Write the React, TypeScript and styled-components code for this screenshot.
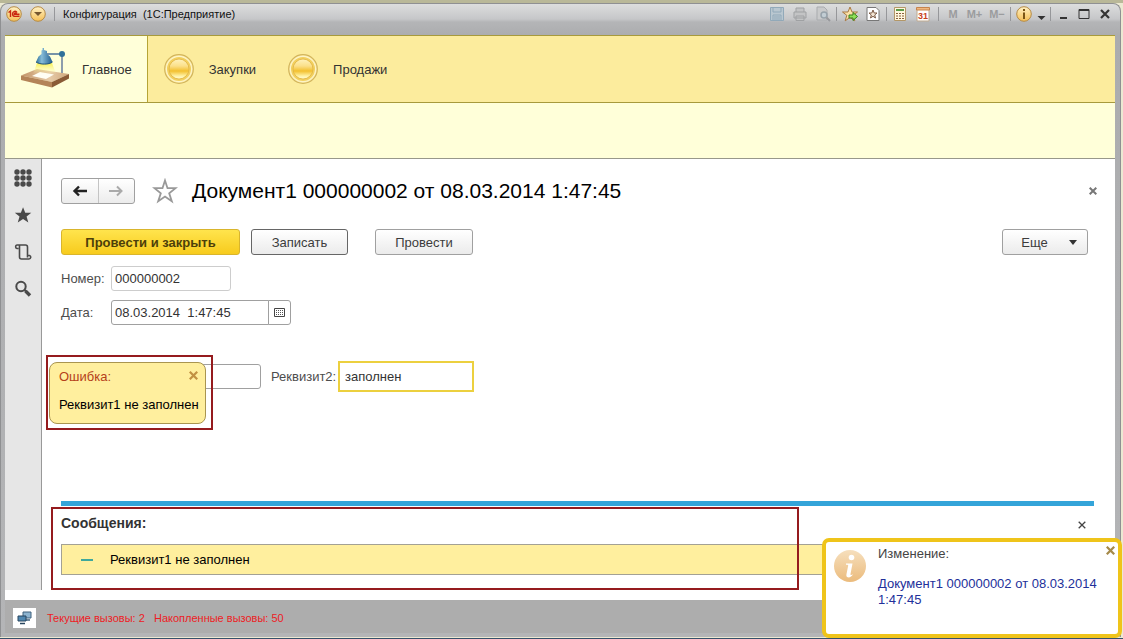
import React from "react";
import styled, { createGlobalStyle, css } from "styled-components";

const Global = createGlobalStyle`
  *, *::before, *::after { box-sizing: border-box; }
  body { margin: 0; background: #e9e8cf; }
  body, button, input { font-family: "Liberation Sans", Arial, sans-serif; font-size: 13px; }
  button, input { margin: 0; }
`;

const Desktop = styled.div`
  min-height: 100vh;
  display: flex;
  padding: 3px 2px 2px 0;
  background: linear-gradient(to top, #35516b 0 1px, transparent 1px), linear-gradient(#b9b898 0 3px, #ece9d2 3px);
`;

const Window = styled.div`
  position: relative;
  flex: 1;
  min-width: 0;
  display: flex;
  flex-direction: column;
  padding: 0 5px 4px 4px;
  border: 1px solid #8f9092;
  border-bottom: 0;
  border-radius: 8px 8px 0 0;
  background: linear-gradient(#dcdddd 0, #c6c7c9 15px, #b4b5b7 18px, #abacae 32px, #b4b5b7 100%);
`;

const TitleBar = styled.header`
  height: 31px;
  padding: 0 2px 11px 1px;
  display: flex;
  align-items: center;
`;

const RoundButton = styled.button`
  width: 16px;
  height: 16px;
  padding: 0;
  border: 0;
  background: none;
  margin-right: 8px;
  svg { display: block; }
`;

const Divider = styled.span<{ $gap?: number }>`
  width: 1px;
  height: 14px;
  background: #96979a;
  margin: 0 ${(p) => p.$gap ?? 7}px;
`;

const WindowTitle = styled.h1`
  flex: 1;
  margin: 0 0 0 8px;
  font: 400 11px/16px "Liberation Sans", Tahoma, sans-serif;
  color: #111;
  white-space: pre;
`;

const ToolGroup = styled.div<{ $gap: number }>`
  display: flex;
  align-items: center;
  gap: ${(p) => p.$gap}px;
`;

const ToolButton = styled.button<{ $width?: number }>`
  width: ${(p) => p.$width ?? 16}px;
  height: 16px;
  padding: 0;
  border: 0;
  background: none;
  font: 700 11px/16px "Liberation Sans", Arial, sans-serif;
  color: #9b9c9e;
  svg { display: block; }
`;

const Sections = styled.nav`
  height: 68px;
  display: flex;
  background: #fcec9d;
  border: 1px solid #a79a3c;
  border-width: 1px 0;
`;

const Section = styled.a<{ $active?: boolean }>`
  display: flex;
  align-items: center;
  gap: 14px;
  padding: 0 16px 0 15px;
  font-size: 13px;
  color: #333;
  text-decoration: none;
  ${(p) =>
    p.$active &&
    css`
      gap: 12px;
      padding-right: 15px;
      background: #ffffd9;
      border-right: 1px solid #b5a536;
    `}
`;

const Commands = styled.div`
  height: 56px;
  background: #ffffd9;
  border-bottom: 1px solid #98988a;
`;

const Body = styled.div`
  flex: 1;
  display: flex;
  background: #fff;
`;

const SideBar = styled.nav`
  width: 37px;
  margin-bottom: 10px;
  padding-top: 9px;
  display: flex;
  flex-direction: column;
  align-items: center;
  gap: 17px;
  background: #e6e6e6;
  border-right: 1px solid #999;
`;

const SideButton = styled.button`
  width: 20px;
  height: 20px;
  padding: 0;
  border: 0;
  background: none;
  svg { display: block; }
`;

const Page = styled.main`
  flex: 1;
  min-width: 0;
  display: flex;
  flex-direction: column;
  padding: 19px 21px 25px 19px;
`;

const Heading = styled.div`
  display: flex;
  align-items: center;
  height: 26px;
`;

const History = styled.div`
  display: flex;
  width: 74px;
  height: 26px;
  border: 1px solid #a0a0a0;
  border-radius: 3px;
  background: linear-gradient(#fff, #ececec);
`;

const HistoryButton = styled.button`
  flex: 1;
  padding: 0;
  border: 0;
  background: none;
  display: flex;
  align-items: center;
  justify-content: center;
  & + & { border-left: 1px solid #c4c4c4; }
`;

const StarButton = styled.button`
  width: 26px;
  height: 26px;
  padding: 0;
  margin: 0 14px 0 17px;
  border: 0;
  background: none;
`;

const DocTitle = styled.h2`
  flex: 1;
  margin: 0;
  font-size: 21px;
  line-height: 28px;
  font-weight: 400;
  color: #000;
`;

const CloseButton = styled.button`
  width: 16px;
  height: 16px;
  padding: 0;
  border: 0;
  background: none;
  display: flex;
  align-items: center;
  justify-content: center;
`;

const HeadingClose = styled(CloseButton)`
  margin-right: -7px;
`;

const Actions = styled.div`
  display: flex;
  align-items: center;
  margin-top: 25px;
  padding-right: 6px;
`;

const Button = styled.button<{ $kind?: "primary" | "focused"; $width: number }>`
  width: ${(p) => p.$width}px;
  height: 26px;
  padding: 0;
  border: 1px solid ${(p) => (p.$kind === "focused" ? "#666" : "#a0a0a0")};
  border-radius: 3px;
  background: linear-gradient(#fff, #ebebeb);
  color: #3c3c3c;
  ${(p) =>
    p.$kind === "primary" &&
    css`
      border-color: #d9b52c;
      background: linear-gradient(#ffe44d, #f7cb1d);
      color: #4d3f0a;
      font-weight: 700;
    `}
`;

const SaveButton = styled(Button)`
  margin: 0 27px 0 11px;
`;

const MoreButton = styled(Button)`
  margin-left: auto;
  display: flex;
  align-items: center;
  justify-content: center;
  gap: 21px;
  padding-left: 8px;
`;

const Row = styled.div<{ $top: number }>`
  position: relative;
  display: flex;
  align-items: center;
  height: 25px;
  margin-top: ${(p) => p.$top}px;
`;

const Label = styled.label<{ $width: number }>`
  width: ${(p) => p.$width}px;
  color: #4d4d4d;
  white-space: nowrap;
`;

const TextInput = styled.input<{ $width: number; $quiet?: boolean }>`
  width: ${(p) => p.$width}px;
  height: 25px;
  padding: 0 4px 0 3px;
  border: 1px solid ${(p) => (p.$quiet ? "#cdcdcd" : "#a0a0a0")};
  border-radius: 3px;
  background: #fff;
  color: #333;
  outline: 0;
`;

const DateInput = styled(TextInput)`
  border-radius: 3px 0 0 3px;
`;

const CalendarButton = styled.button`
  width: 23px;
  height: 25px;
  padding: 0;
  margin-left: -1px;
  border: 1px solid #a0a0a0;
  border-radius: 0 3px 3px 0;
  background: #fff;
  display: flex;
  align-items: center;
  justify-content: center;
`;

const FirstInput = styled(TextInput)`
  margin: 0 10px 0 64px;
`;

const ActiveInput = styled(TextInput)`
  height: 31px;
  padding: 0 5px;
  border: 2px solid #ecd03f;
  border-radius: 0;
`;

const Outline = styled.div`
  position: absolute;
  border: 2px solid #951b1e;
  pointer-events: none;
`;

const ErrorOutline = styled(Outline)`
  left: -15px;
  top: -9px;
  width: 167px;
  height: 75px;
`;

const ErrorTip = styled.div`
  position: absolute;
  left: -12px;
  top: -2px;
  width: 157px;
  height: 62px;
  padding: 6px 4px 0 9px;
  border: 1px solid #a99550;
  border-radius: 8px;
  background: #ffef9e;
  color: #000;
  line-height: 16px;
  white-space: nowrap;
`;

const TipHead = styled.div`
  display: flex;
  justify-content: space-between;
  align-items: flex-start;
  margin-bottom: 12px;
  color: #b5411a;
`;

const TipClose = styled(CloseButton)`
  height: 12px;
`;

const Messages = styled.section`
  position: relative;
  margin-top: auto;
  border-top: 5px solid #34a4d9;
`;

const MessagesHead = styled.div`
  display: flex;
  align-items: center;
  justify-content: space-between;
  height: 38px;
  padding-right: 4px;
`;

const MessagesTitle = styled.h3`
  margin: 0 0 4px;
  font-size: 14px;
  line-height: 16px;
  color: #333;
`;

const MessageItem = styled.div`
  display: flex;
  align-items: center;
  gap: 17px;
  height: 31px;
  padding-left: 19px;
  border: 1px solid #a3a194;
  background: #ffef9e;
  color: #000;
`;

const Dash = styled.span`
  width: 12px;
  height: 2px;
  background: #3fa89c;
`;

const MessagesOutline = styled(Outline)`
  left: -10px;
  right: 295px;
  top: 1px;
  bottom: -15px;
`;

const StatusBar = styled.footer`
  display: flex;
  align-items: center;
  gap: 11px;
  height: 33px;
  padding: 2px 8px 0;
  background: #adadad;
  color: #ee1c24;
  font-size: 11px;
  white-space: pre;
`;

const StatusIcon = styled.span`
  width: 23px;
  height: 20px;
  background: #fff;
  display: flex;
  align-items: center;
  justify-content: center;
`;

const Notice = styled.aside`
  position: absolute;
  right: -2px;
  bottom: -1px;
  width: 300px;
  height: 100px;
  display: flex;
  gap: 12px;
  border: 4px solid #efc41a;
  border-radius: 7px;
  padding-left: 8px;
  background: #fff;
  line-height: 16px;
`;

const NoticeIcon = styled.svg`
  margin-top: 8px;
  flex: none;
`;

const NoticeText = styled.div`
  flex: 1;
  padding-top: 4px;
  margin-right: -16px;
  color: #444;
`;

const NoticeLink = styled.a`
  display: block;
  margin-top: 14px;
  color: #22309a;
  text-decoration: none;
`;

const Cross = ({ size = 8, color = "#777", weight = 2 }: { size?: number; color?: string; weight?: number }) => (
  <svg width={size} height={size} viewBox="0 0 8 8" aria-hidden="true">
    <path d="M0.7 0.7 7.3 7.3M7.3 0.7 0.7 7.3" stroke={color} strokeWidth={weight} />
  </svg>
);

const LampIcon = () => (
  <svg width="50" height="42" viewBox="0 0 50 42" aria-hidden="true">
    <defs>
      <linearGradient id="shade" x1="0" x2="1">
        <stop offset="0" stopColor="#2f7099" />
        <stop offset=".35" stopColor="#86bcd8" />
        <stop offset="1" stopColor="#1f5c8d" />
      </linearGradient>
      <linearGradient id="desk" x1="0" x2="1">
        <stop offset="0" stopColor="#c39468" />
        <stop offset=".6" stopColor="#e6cba8" />
        <stop offset="1" stopColor="#cfa67a" />
      </linearGradient>
      <linearGradient id="beam" x1="0" y1="0" x2="0" y2="1">
        <stop offset="0" stopColor="#f8ef4a" />
        <stop offset="1" stopColor="#fdfbb0" stopOpacity="0" />
      </linearGradient>
    </defs>
    <path d="M1 27.500 17 21 49 26 32 34Z" fill="url(#desk)" />
    <path d="M1 27.500 32 34V39.500L1 32Z" fill="#b48458" />
    <path d="M32 34 49 26V30.500L32 39.500Z" fill="#8a5b36" />
    <path d="M12 28 20 24 34 26.500 26 31Z" fill="#fffef4" />
    <path d="M42 8V25" stroke="#8d9dac" strokeWidth="2" />
    <path d="M27 6H41" stroke="#7793a8" strokeWidth="2" />
    <circle cx="42" cy="6" r="3" fill="#2f7099" />
    <path d="M17 15 13 26 36 26 32 15Z" fill="url(#beam)" />
    <path d="M21.500 2.500 22.500 2V0H24V2L27 3V6L30 8.500 32.500 14C29 16.800 20 16.800 16 14L18.500 8.500 21.500 6Z" fill="url(#shade)" />
    <path d="M16 14C20 16.800 29 16.800 32.500 14" fill="none" stroke="#1c527d" />
  </svg>
);

const CoinIcon = () => (
  <svg width="32" height="32" viewBox="0 0 32 32" aria-hidden="true">
    <defs>
      <linearGradient id="coin" x1="0" y1="0" x2="0" y2="1">
        <stop offset="0" stopColor="#fff3bd" />
        <stop offset=".35" stopColor="#fbe08a" />
        <stop offset=".6" stopColor="#f3c02f" />
        <stop offset=".85" stopColor="#fff2a4" />
        <stop offset="1" stopColor="#fffbd6" />
      </linearGradient>
    </defs>
    <circle cx="16" cy="16" r="14.300" fill="#fae79c" stroke="#d2b45c" strokeWidth="1.200" />
    <circle cx="16" cy="16" r="12.600" fill="#f2d05f" stroke="#fdf4c8" strokeWidth="1.200" />
    <circle cx="16" cy="16" r="10" fill="url(#coin)" stroke="#dfb243" strokeWidth="0.800" />
  </svg>
);

const Disc = ({ children }: { children: React.ReactNode }) => (
  <svg width="16" height="16" viewBox="0 0 16 16" aria-hidden="true">
    <defs>
      <linearGradient id="disc" x1="0" y1="0" x2="0" y2="1">
        <stop offset="0" stopColor="#fff1c4" />
        <stop offset="1" stopColor="#f5bf55" />
      </linearGradient>
    </defs>
    <circle cx="8" cy="8" r="7.300" fill="url(#disc)" stroke="#b58a45" />
    {children}
  </svg>
);

const star = "M8 1 10 6H15.500L11.200 9.300 12.800 14.800 8 11.500 3.200 14.800 4.800 9.300 0.500 6H6Z";

const Icon = ({ children, size = 16 }: { children: React.ReactNode; size?: number }) => (
  <svg width={size} height={size} viewBox="0 0 16 16" fill="none" aria-hidden="true">
    {children}
  </svg>
);

const Arrow = ({ back }: { back?: boolean }) => (
  <svg width="16" height="12" viewBox="0 0 16 12" fill="none" aria-hidden="true">
    {back ? (
      <path d="M15 6H3M7 1.500 2.500 6 7 10.500" stroke="#222" strokeWidth="2.400" />
    ) : (
      <path d="M1 6H13M9 1.500 13.500 6 9 10.500" stroke="#aaa" strokeWidth="2" />
    )}
  </svg>
);

export default function App() {
  return (
    <>
      <Global />
      <Desktop>
        <Window>
          <TitleBar>
            <RoundButton aria-label="1С">
              <Disc>
                <path d="M2.500 6.500 4.500 5V11M11 6.500C10 4.500 6.500 5 6.500 8S9 10.500 13.500 10.200M10.500 7.600C9.500 6.500 8.200 7 8.300 8.200H13.500" stroke="#c9270f" strokeWidth="1.400" fill="none" />
              </Disc>
            </RoundButton>
            <RoundButton aria-label="Меню">
              <Disc>
                <path d="M4 6H12L8 10Z" fill="#75562f" />
              </Disc>
            </RoundButton>
            <Divider $gap={0} />
            <WindowTitle>{"Конфигурация  (1С:Предприятие)"}</WindowTitle>
            <ToolGroup $gap={7}>
              <ToolButton aria-label="Сохранить">
                <Icon>
                  <path d="M1.500 1.500H14.500V14.500H1.500Z" fill="#b9c7d0" stroke="#91a9b9" />
                  <path d="M4 1.500V6H12V1.500M4 14.500V9H12V14.500M5 11H11M5 13H11" stroke="#91a9b9" />
                </Icon>
              </ToolButton>
              <ToolButton aria-label="Печать">
                <Icon>
                  <path d="M4 6V2H12V6M2 6H14V12H2ZM4 10H12V14.500H4Z" stroke="#9fa1a3" fill="#c3c4c5" />
                </Icon>
              </ToolButton>
              <ToolButton aria-label="Просмотр">
                <Icon>
                  <path d="M2 1H9L12 4V14H2Z" fill="#c9cacb" stroke="#a9abae" />
                  <circle cx="9" cy="9" r="3" stroke="#97a2aa" strokeWidth="1.500" fill="#c2cdd4" />
                  <path d="M11.500 11.500 15 15" stroke="#98999c" strokeWidth="2" />
                </Icon>
              </ToolButton>
            </ToolGroup>
            <Divider $gap={5} />
            <ToolGroup $gap={7}>
              <ToolButton aria-label="Добавить в избранное">
                <Icon>
                  <path d={star} fill="#fbe2a8" stroke="#a87943" />
                  <path d="M7 9H11V6.500L15.500 10.500 11 14.500V12H7Z" fill="#8fe05a" stroke="#347d1b" />
                </Icon>
              </ToolButton>
              <ToolButton aria-label="Избранное">
                <Icon>
                  <path d="M2 1.500H11L14 4.500V14.500H2Z" fill="#fff" stroke="#777" />
                  <path d="M8 4 9.200 7H12L9.700 9 10.500 12 8 10.300 5.500 12 6.300 9 4 7H6.800Z" stroke="#7b5a45" fill="#f2e4d2" />
                </Icon>
              </ToolButton>
            </ToolGroup>
            <Divider $gap={5} />
            <ToolGroup $gap={7}>
              <ToolButton aria-label="Калькулятор">
                <Icon>
                  <path d="M2.500 1.500H13.500V14.500H2.500Z" fill="#fff8df" stroke="#b39768" />
                  <path d="M4 4H12" stroke="#5d9a48" strokeWidth="2" />
                  <path d="M4 7.500H12M4 10H12M4 12.500H12" stroke="#8a5d3c" strokeWidth="1.200" strokeDasharray="2 1" />
                </Icon>
              </ToolButton>
              <ToolButton aria-label="Календарь">
                <Icon>
                  <path d="M2 2H14V15H2Z" fill="#fff" stroke="#c0aa90" />
                  <path d="M1.500 1.500H14.500V4H1.500Z" fill="#f0b880" stroke="#c5834c" />
                  <text x="8" y="13" textAnchor="middle" fontSize="9" fontWeight="700" fill="#c8421a">31</text>
                </Icon>
              </ToolButton>
            </ToolGroup>
            <Divider />
            <ToolGroup $gap={5}>
              <ToolButton $width={14}>M</ToolButton>
              <ToolButton $width={19}>M+</ToolButton>
              <ToolButton $width={16}>M−</ToolButton>
            </ToolGroup>
            <Divider $gap={5} />
            <ToolGroup $gap={5}>
              <ToolButton aria-label="Справка">
                <Disc>
                  <path d="M8 3V5M8 6.500V13" stroke="#7a5515" strokeWidth="2" />
                </Disc>
              </ToolButton>
              <ToolButton $width={9} aria-label="Ещё">
                <svg width="9" height="16" viewBox="0 0 9 16"><path d="M0.500 10H8.500L4.500 14Z" fill="#333" /></svg>
              </ToolButton>
            </ToolGroup>
            <Divider $gap={4} />
            <ToolGroup $gap={5}>
              <ToolButton aria-label="Свернуть">
                <Icon><path d="M5 12H12" stroke="#333" strokeWidth="2" /></Icon>
              </ToolButton>
              <ToolButton aria-label="Развернуть">
                <Icon><path d="M3 3.500H13V12.500H3Z" stroke="#333" /><path d="M3 4H13" stroke="#333" strokeWidth="2" /></Icon>
              </ToolButton>
              <ToolButton aria-label="Закрыть">
                <Icon><path d="M4 4 12 12M12 4 4 12" stroke="#333" strokeWidth="2.200" /></Icon>
              </ToolButton>
            </ToolGroup>
          </TitleBar>

          <Sections>
            <Section href="#main" $active><LampIcon />Главное</Section>
            <Section href="#purchases"><CoinIcon />Закупки</Section>
            <Section href="#sales"><CoinIcon />Продажи</Section>
          </Sections>
          <Commands />

          <Body>
            <SideBar>
              <SideButton aria-label="Разделы">
                <svg width="20" height="20" viewBox="0 0 20 20" fill="#4a4a4a">
                  {[4, 10, 16].map((y) => [4, 10, 16].map((x) => <circle key={`${x}-${y}`} cx={x} cy={y} r="2.700" />))}
                </svg>
              </SideButton>
              <SideButton aria-label="Избранное">
                <svg width="20" height="20" viewBox="0 0 16 16"><path d={star} fill="#4a4a4a" transform="translate(1 1) scale(.88)" /></svg>
              </SideButton>
              <SideButton aria-label="История">
                <svg width="20" height="20" viewBox="0 0 20 20" fill="none" stroke="#4a4a4a" strokeWidth="1.600">
                  <path d="M5.500 6.500H4A1.800 1.800 0 0 1 4 3H12.500A2 2 0 0 1 14.500 5V13.500M6.500 3.500V15A2 2 0 0 0 8.500 17H16A1.800 1.800 0 0 0 16.500 13.500H14.500V15.500" />
                </svg>
              </SideButton>
              <SideButton aria-label="Поиск">
                <svg width="20" height="20" viewBox="0 0 20 20" fill="none" stroke="#4a4a4a">
                  <circle cx="8" cy="7.500" r="4.700" strokeWidth="2" />
                  <path d="M11.500 11 13 12.500" strokeWidth="2" />
                  <path d="M12.500 12 17 16.500" strokeWidth="3.400" />
                </svg>
              </SideButton>
            </SideBar>

            <Page>
              <Heading>
                <History>
                  <HistoryButton aria-label="Назад"><Arrow back /></HistoryButton>
                  <HistoryButton aria-label="Вперёд"><Arrow /></HistoryButton>
                </History>
                <StarButton aria-label="В избранное">
                  <svg width="26" height="26" viewBox="0 0 26 26" fill="none">
                    <path d="M13 2.500 15.500 10.200H23.500L17.200 15.200 19.800 23.200 13 18.500 6.200 23.200 8.800 15.200 2.500 10.200H10.500Z" stroke="#999" strokeWidth="1.800" />
                  </svg>
                </StarButton>
                <DocTitle>Документ1 000000002 от 08.03.2014 1:47:45</DocTitle>
                <HeadingClose aria-label="Закрыть документ"><Cross /></HeadingClose>
              </Heading>

              <Actions>
                <Button $kind="primary" $width={179}>Провести и закрыть</Button>
                <SaveButton $kind="focused" $width={97}>Записать</SaveButton>
                <Button $width={98}>Провести</Button>
                <MoreButton $width={86}>
                  Еще
                  <svg width="8" height="5" viewBox="0 0 8 5"><path d="M0 0H8L4 5Z" fill="#333" /></svg>
                </MoreButton>
              </Actions>

              <Row $top={11}>
                <Label htmlFor="number" $width={50}>Номер:</Label>
                <TextInput id="number" $width={120} $quiet defaultValue="000000002" />
              </Row>
              <Row $top={9}>
                <Label htmlFor="date" $width={50}>Дата:</Label>
                <DateInput id="date" $width={158} defaultValue="08.03.2014  1:47:45" />
                <CalendarButton aria-label="Выбрать дату">
                  <svg width="11" height="9" viewBox="0 0 11 9" fill="none">
                    <path d="M.5.5H10.500V8.500H.5Z" stroke="#444" />
                    <path d="M2 2.500H9M2 4.500H9M2 6.500H9" stroke="#555" strokeDasharray="1 1" />
                  </svg>
                </CalendarButton>
              </Row>
              <Row $top={39}>
                <FirstInput aria-label="Реквизит1" $width={136} />
                <Label htmlFor="second" $width={67}>Реквизит2:</Label>
                <ActiveInput id="second" $width={136} defaultValue="заполнен" />
                <ErrorOutline />
                <ErrorTip role="alert">
                  <TipHead>
                    Ошибка:
                    <TipClose aria-label="Скрыть ошибку"><Cross size={9} color="#c29143" /></TipClose>
                  </TipHead>
                  Реквизит1 не заполнен
                </ErrorTip>
              </Row>

              <Messages>
                <MessagesHead>
                  <MessagesTitle>Сообщения:</MessagesTitle>
                  <CloseButton aria-label="Закрыть сообщения"><Cross color="#444" weight={1.3} /></CloseButton>
                </MessagesHead>
                <MessageItem><Dash />Реквизит1 не заполнен</MessageItem>
                <MessagesOutline />
              </Messages>
            </Page>
          </Body>

          <StatusBar>
            <StatusIcon>
              <svg width="15" height="14" viewBox="0 0 15 14" aria-hidden="true">
                <path d="M6 1H14V7H6Z" fill="#8db4d0" stroke="#3f617d" />
                <path d="M9 9H13" stroke="#3f617d" strokeWidth="1.500" />
                <path d="M1 5H9V10H1Z" fill="#4f87b0" stroke="#27455f" />
                <path d="M3 12.500H8" stroke="#27455f" strokeWidth="1.500" />
              </svg>
            </StatusIcon>
            {"Текущие вызовы: 2   Накопленные вызовы: 50"}
          </StatusBar>

          <Notice role="status">
            <NoticeIcon width="32" height="32" viewBox="0 0 32 32" aria-hidden="true">
              <defs>
                <linearGradient id="info" x1="0" y1="0" x2="0" y2="1">
                  <stop offset="0" stopColor="#f6dfbd" />
                  <stop offset="1" stopColor="#ebbb7c" />
                </linearGradient>
              </defs>
              <circle cx="16" cy="16" r="16" fill="url(#info)" />
              <circle cx="17.500" cy="7.500" r="2.800" fill="#fff" />
              <path d="M12 13.500H18.500L16.500 24C16.300 25.500 17.500 25.200 19 24.200C18 26.500 15.500 27.800 13.600 27.300C12.300 26.900 12.200 25.500 12.500 24L14.200 15.500C14.300 14.800 13.500 14.700 12 14.800Z" fill="#fff" />
            </NoticeIcon>
            <NoticeText>
              Изменение:
              <NoticeLink href="#document">Документ1 000000002 от 08.03.2014 1:47:45</NoticeLink>
            </NoticeText>
            <CloseButton aria-label="Закрыть уведомление"><Cross size={9} color="#a58a4a" /></CloseButton>
          </Notice>
        </Window>
      </Desktop>
    </>
  );
}
